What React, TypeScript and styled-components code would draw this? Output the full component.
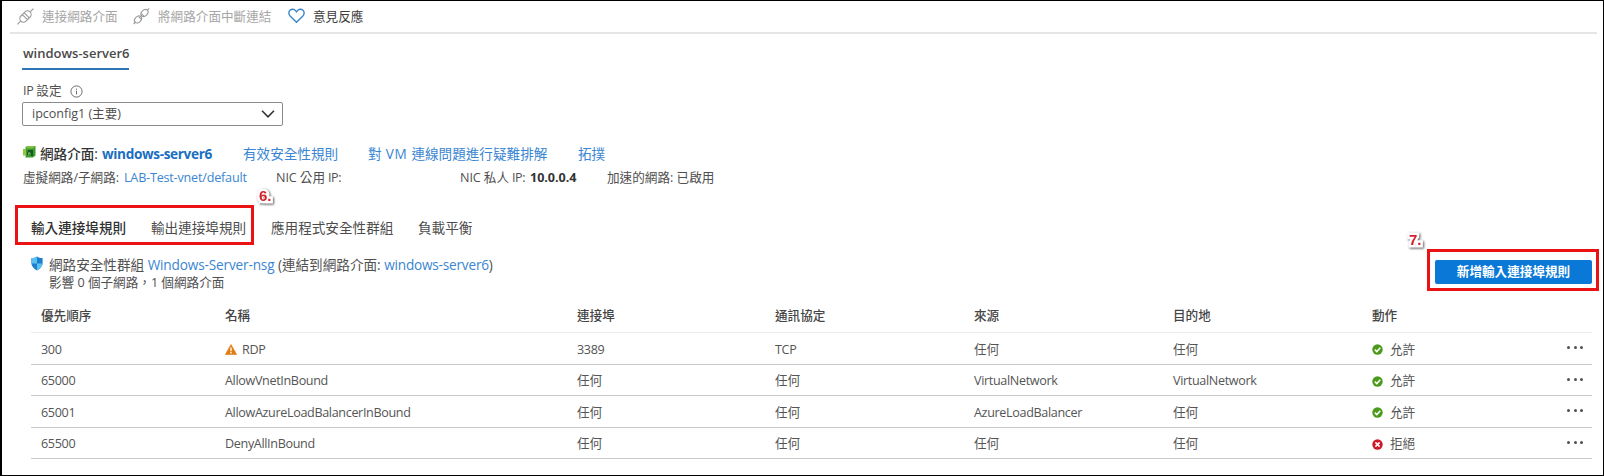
import React from "react";
import styled, { createGlobalStyle } from "styled-components";

const Global = createGlobalStyle`
  *, *::before, *::after { box-sizing: border-box; }
  html, body { margin: 0; padding: 0; background: #fff; }
  body { overflow: hidden; }
`;

const Page = styled.main`
  position: relative;
  width: 1604px;
  height: 476px;
  border: 1px solid #000;
  border-left-width: 2px;
  background: #fff;
  color: #505050;
  font-family: "Open Sans", "Noto Sans CJK TC", sans-serif;
  font-size: 12.6px;
  line-height: 18px;
  white-space: nowrap;
  overflow: hidden;
`;

const Latin = styled.span<{ $track?: number }>`
  letter-spacing: ${(p) => p.$track ?? -0.35}px;
`;

const Toolbar = styled.div`
  display: flex;
  align-items: center;
  height: 33px;
  margin: 0 6px 0 8px;
  padding: 1px 0 0 7px;
  border-bottom: 2px solid #e6e4e4;
`;

const Command = styled.button<{ $disabled?: boolean; $width: number }>`
  display: flex;
  align-items: center;
  gap: 8px;
  width: ${(p) => p.$width}px;
  padding: 0;
  border: 0;
  background: none;
  font: inherit;
  text-align: left;
  color: ${(p) => (p.$disabled ? "#a6a6a6" : "#3c3c3c")};
  svg { margin-top: -2px; }
`;

const ServerTab = styled.div`
  width: 107px;
  height: 26px;
  margin: 10px 0 0 20px;
  padding-left: 1px;
  border-bottom: 2px solid #2f76b5;
  font-weight: 600;
  font-size: 13px;
  color: #4a4a4a;
`;

const FieldLabel = styled.label`
  display: flex;
  align-items: center;
  gap: 8px;
  height: 18px;
  margin: 12px 0 0 21px;
`;

const Select = styled.div`
  display: flex;
  align-items: center;
  justify-content: space-between;
  width: 261px;
  height: 24px;
  margin: 2px 0 0 20px;
  padding: 0 6px 0 9px;
  border: 1px solid #8c8c8c;
  border-radius: 2px;
`;

const InfoRow = styled.div<{ $top: number; $size?: number }>`
  display: flex;
  align-items: center;
  height: 20px;
  margin: ${(p) => p.$top}px 0 0 21px;
  font-size: ${(p) => p.$size ?? 12.6}px;
`;

const Item = styled.div<{ $width: number; $bold?: boolean }>`
  flex: none;
  display: flex;
  align-items: center;
  width: ${(p) => p.$width}px;
  font-weight: ${(p) => (p.$bold ? 500 : 400)};
  color: ${(p) => (p.$bold ? "#333" : "inherit")};
  white-space: pre;
  svg { margin-top: -5px; }
`;

const Link = styled.a<{ $bold?: boolean }>`
  color: ${(p) => (p.$bold ? "#1a6fc0" : "#3a86d2")};
  font-weight: ${(p) => (p.$bold ? 700 : 400)};
`;

const Strong = styled.strong`
  font-weight: 700;
  color: #333;
`;

const RuleTabs = styled.nav`
  display: flex;
  align-items: center;
  height: 20px;
  margin: 30px 0 0 29px;
  font-size: 13.6px;
`;

const RuleTab = styled.div<{ $width: number; $active?: boolean }>`
  width: ${(p) => p.$width}px;
  color: ${(p) => (p.$active ? "#303030" : "#4c4c4c")};
  font-weight: ${(p) => (p.$active ? 500 : 400)};
`;

const GroupBar = styled.section`
  display: flex;
  justify-content: space-between;
  height: 41px;
  margin: 17px 11px 0 29px;
`;

const GroupInfo = styled.div`
  display: flex;
  gap: 6px;
`;

const GroupLine = styled.div<{ $size: number }>`
  height: 18px;
  line-height: 20px;
  font-size: ${(p) => p.$size}px;
  white-space: pre;
`;

const ShieldSlot = styled.div`
  width: 12px;
  padding-top: 1px;
`;

const AddButton = styled.button`
  width: 157px;
  height: 24px;
  margin-top: 5px;
  padding: 0 0 1px;
  border: 0;
  border-radius: 2px;
  background: #0a78d6;
  color: #fff;
  font: inherit;
  font-weight: 700;
  line-height: 22px;
`;

const Table = styled.div`
  width: 1561px;
  margin: 4px 0 0 29px;
`;

const Row = styled.div<{ $head?: boolean; $height: number }>`
  display: grid;
  grid-template-columns: 184px 352px 198px 199px 199px 199px 195px 1fr;
  align-items: center;
  height: ${(p) => p.$height}px;
  padding: ${(p) => (p.$head ? "0 0 1px 10px" : "2px 0 0 10px")};
  border-bottom: 1px solid ${(p) => (p.$head ? "#ececec" : "#c9c9c9")};
  font-weight: ${(p) => (p.$head ? 500 : 400)};
  color: ${(p) => (p.$head ? "#454545" : "#555")};
`;

const Cell = styled.div<{ $gap?: number }>`
  display: flex;
  align-items: center;
  gap: ${(p) => p.$gap ?? 5}px;
`;

const Dots = styled.div`
  display: flex;
  gap: 3.5px;
  margin-top: -4px;
  i {
    width: 3px;
    height: 3px;
    border-radius: 50%;
    background: #505050;
  }
`;

const Highlight = styled.div<{ $x: number; $y: number; $w: number; $h: number }>`
  position: absolute;
  left: ${(p) => p.$x - 2}px;
  top: ${(p) => p.$y - 1}px;
  width: ${(p) => p.$w}px;
  height: ${(p) => p.$h}px;
  border: 3px solid #ea1212;
  pointer-events: none;
`;

const Step = styled.div<{ $x: number; $y: number }>`
  position: absolute;
  left: ${(p) => p.$x - 2}px;
  top: ${(p) => p.$y - 1}px;
  font: bold 15px/18px "Liberation Sans", Arial, sans-serif;
  color: #d3202a;
  -webkit-text-stroke: 5px #fff;
  paint-order: stroke fill;
  filter: drop-shadow(1px 1px 1px rgba(0, 0, 0, 0.65));
`;

const Plug = ({ apart }: { apart?: boolean }) => (
  <svg width="17" height="17" viewBox="0 0 17 17" fill="none" stroke="#9a9a9a" strokeWidth="1.1">
    {apart ? (
      <>
        <ellipse cx="5" cy="11.500" rx="4" ry="2.900" transform="rotate(-45 5 11.500)" />
        <ellipse cx="11.500" cy="5" rx="4" ry="2.900" transform="rotate(-45 11.500 5)" />
        <path d="M.6 16l2-2M14.200 2.400L16.200.4M5.800 8.800l2.400 2.400M8.500 5.800l2.400 2.400" />
      </>
    ) : (
      <>
        <rect x="2" y="4.900" width="13" height="7.200" rx="3.600" transform="rotate(-45 8.500 8.500)" />
        <path d="M.4 16.400l3.200-3.200M13.500 3.500L16.400.6M5.300 6.600l4.800 4.800M7.200 4.800l4.800 4.800" />
      </>
    )}
  </svg>
);

const Heart = () => (
  <svg width="17" height="16" viewBox="0 0 17 16" fill="none" stroke="#3a86c8" strokeWidth="1.4">
    <path d="M8.500 14.300L2.100 8C.4 6.200.5 3.700 2 2.300c1.700-1.600 4.200-1.300 5.500.3l1 1.200 1-1.200c1.300-1.600 3.800-1.900 5.500-.3 1.500 1.400 1.600 3.900-.1 5.700z" />
  </svg>
);

const Info = () => (
  <svg width="13" height="13" viewBox="0 0 13 13" fill="none" stroke="#6a6a6a">
    <circle cx="6.500" cy="6.500" r="5.600" />
    <path d="M6.500 5.800v3.600M6.500 3.600v1.200" />
  </svg>
);

const Chevron = () => (
  <svg width="16" height="10" viewBox="0 0 16 10" fill="none" stroke="#333" strokeWidth="1.600">
    <path d="M2 1.800l6 6 6-6" />
  </svg>
);

const Nic = () => (
  <svg width="13" height="12" viewBox="0 0 13 12">
    <path d="M2.500 1L5 0h7.500v9.500L10 11.500H2.500z" fill="#3f9a2e" />
    <path d="M0 3h3v6.500H0z" fill="#8dc63f" />
    <path d="M2.500 2.500L5 0h7.500L10 2.500z" fill="#7cc142" />
    <path d="M5 4h5v6H8V6.500L5.500 9H4V7.500z" fill="#155a22" />
    <path d="M5.500 6.500h2L5 9z" fill="#b7dd8c" />
  </svg>
);

const Shield = () => (
  <svg width="12" height="15" viewBox="0 0 12 15">
    <path d="M6 .5c1.700 1.200 3.600 1.600 5.600 1.500v5c0 3.400-2.600 5.600-5.600 7.500C3 12.600.4 10.400.4 7V2C2.500 2.100 4.300 1.700 6 .5z" fill="#1c7fd0" />
    <path d="M6 .5V7.500H.4V2C2.500 2.100 4.300 1.700 6 .5zM6 7.500h5.600c-.3 3.200-2.700 5.200-5.600 7z" fill="#5cc0ee" />
  </svg>
);

const Warning = () => (
  <svg width="12" height="11" viewBox="0 0 12 11">
    <path d="M6 .5L11.700 10.500H.3z" fill="#df7d12" stroke="#df7d12" strokeLinejoin="round" strokeWidth=".6" />
    <path d="M6 3.500v3.700M6 8v1.400" stroke="#fff" strokeWidth="1.300" />
  </svg>
);

const Status = ({ ok }: { ok: boolean }) => (
  <svg width="11" height="11" viewBox="0 0 11 11" fill="none" stroke="#fff" strokeWidth="1.500">
    <circle cx="5.500" cy="5.500" r="5.200" fill={ok ? "#4c9a1c" : "#cf1826"} stroke="none" />
    {ok ? <path d="M2.800 5.600l2 2 3.500-3.800" /> : <path d="M3.400 3.400l4.200 4.200M7.600 3.400L3.400 7.600" />}
  </svg>
);

const isLatin = (s: string) => /^[\x20-\x7e]+$/.test(s);
const Text = ({ children }: { children: string }) =>
  isLatin(children) ? <Latin>{children}</Latin> : <span>{children}</span>;

const columns = ["優先順序", "名稱", "連接埠", "通訊協定", "來源", "目的地", "動作"];

interface Rule {
  cells: string[];
  warn?: boolean;
  allow: boolean;
  height: number;
}

const rules: Rule[] = [
  { cells: ["300", "RDP", "3389", "TCP", "任何", "任何"], warn: true, allow: true, height: 32 },
  { cells: ["65000", "AllowVnetInBound", "任何", "任何", "VirtualNetwork", "VirtualNetwork"], allow: true, height: 31 },
  { cells: ["65001", "AllowAzureLoadBalancerInBound", "任何", "任何", "AzureLoadBalancer", "任何"], allow: true, height: 32 },
  { cells: ["65500", "DenyAllInBound", "任何", "任何", "任何", "任何"], allow: false, height: 31 },
];

export default function App() {
  return (
    <>
      <Global />
      <Page>
        <Toolbar>
          <Command $disabled $width={116}><Plug />連接網路介面</Command>
          <Command $disabled $width={155}><Plug apart />將網路介面中斷連結</Command>
          <Command $width={90}><Heart />意見反應</Command>
        </Toolbar>
        <ServerTab><Latin $track={0}>windows-server6</Latin></ServerTab>
        <FieldLabel><span><Latin>IP </Latin>設定</span><Info /></FieldLabel>
        <Select><span><Latin $track={-0.05}>ipconfig1 (</Latin>主要<Latin>)</Latin></span><Chevron /></Select>

        <InfoRow $top={18} $size={13.6}>
          <Item $width={17}><Nic /></Item>
          <Item $width={62} $bold>網路介面:</Item>
          <Item $width={141}><Link $bold><Latin>windows-server6</Latin></Link></Item>
          <Item $width={125}><Link>有效安全性規則</Link></Item>
          <Item $width={210}><Link>對<Latin $track={0.6}> VM </Latin>連線問題進行疑難排解</Link></Item>
          <Item $width={40}><Link>拓撲</Link></Item>
        </InfoRow>
        <InfoRow $top={4}>
          <Item $width={101}>虛擬網路/子網路:</Item>
          <Item $width={152}><Link><Latin $track={-0.2}>LAB-Test-vnet/default</Latin></Link></Item>
          <Item $width={184}><Latin $track={-0.1}>NIC </Latin>公用<Latin> IP:</Latin></Item>
          <Item $width={70}><Latin $track={-0.1}>NIC </Latin>私人<Latin> IP:</Latin></Item>
          <Item $width={77}><Strong><Latin $track={-0.05}>10.0.0.4</Latin></Strong></Item>
          <Item $width={120}>加速的網路: 已啟用</Item>
        </InfoRow>

        <RuleTabs>
          <RuleTab $width={120} $active>輸入連接埠規則</RuleTab>
          <RuleTab $width={120}>輸出連接埠規則</RuleTab>
          <RuleTab $width={147}>應用程式安全性群組</RuleTab>
          <RuleTab $width={60}>負載平衡</RuleTab>
        </RuleTabs>

        <GroupBar>
          <GroupInfo>
            <ShieldSlot><Shield /></ShieldSlot>
            <div>
              <GroupLine $size={13.6}>
                網路安全性群組 <Link><Latin $track={-0.15}>Windows-Server-nsg</Latin></Link>
                {" "}(連結到網路介面: <Link><Latin $track={-0.2}>windows-server6</Latin></Link>)
              </GroupLine>
              <GroupLine $size={12.6}>影響 0 個子網路，1 個網路介面</GroupLine>
            </div>
          </GroupInfo>
          <AddButton>新增輸入連接埠規則</AddButton>
        </GroupBar>

        <Table>
          <Row $head $height={33}>
            {columns.map((c) => <Cell key={c}>{c}</Cell>)}
          </Row>
          {rules.map((r) => (
            <Row key={r.cells[0]} $height={r.height}>
              {r.cells.map((c, i) => (
                <Cell key={i}>
                  {i === 1 && r.warn && <Warning />}
                  <Text>{c}</Text>
                </Cell>
              ))}
              <Cell $gap={7}><Status ok={r.allow} />{r.allow ? "允許" : "拒絕"}</Cell>
              <Dots><i /><i /><i /></Dots>
            </Row>
          ))}
        </Table>

        <Highlight $x={15} $y={205} $w={239} $h={40} />
        <Highlight $x={1427} $y={249} $w={172} $h={42} />
        <Step $x={259} $y={187}>6.</Step>
        <Step $x={1409} $y={231}>7.</Step>
      </Page>
    </>
  );
}
